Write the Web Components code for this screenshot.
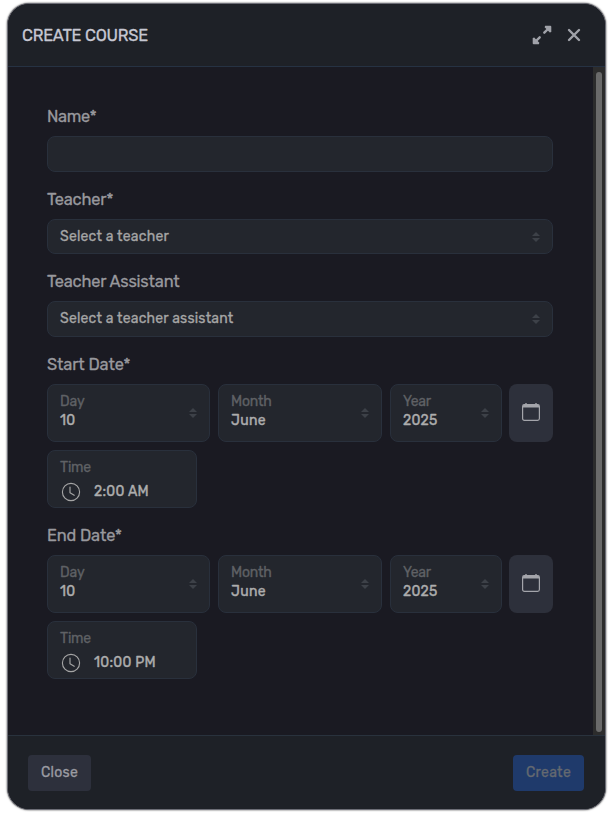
<!DOCTYPE html>
<html lang="en">
<head>
<meta charset="utf-8">
<title>Create course</title>
<style>
html,body{margin:0;background:#fff}
body{font-family:Rubik,Roboto,"Liberation Sans",sans-serif;font-weight:400;-webkit-text-stroke:.3px;width:612px;height:814px;overflow:hidden}
</style>
</head>
<body>
<course-dialog></course-dialog>
<script>
const define = (name, html, init) => customElements.define(name, class extends HTMLElement {
  connectedCallback() {
    if (this.shadowRoot) return;
    const t = document.createElement('template');
    t.innerHTML = html;
    this.attachShadow({mode: 'open'}).append(t.content.cloneNode(true));
    if (init) init(this, this.shadowRoot);
  }
});

/* Text run tracked to a given advance width */
define('fit-text', `<style>:host{display:block;white-space:nowrap}span{display:inline-block}</style><span><slot></slot></span>`,
  (el, root) => {
    const s = root.querySelector('span');
    const n = el.textContent.length;
    s.style.letterSpacing = (Number(el.getAttribute('w')) - s.getBoundingClientRect().width) / n + 'px';
  });

define('field-label', `<style>:host{display:block;height:20px;font-size:16.4px;line-height:20px;color:#98989d}</style><slot></slot>`);

define('sort-arrows', `<style>:host{display:block;width:8px;height:10px}svg{display:block}</style>
<svg width="8" height="10"><path d="M4 0L8 4H0zM0 6H8L4 10z" fill="#3d4148"/></svg>`);

define('text-box', `<style>:host{display:block;box-sizing:border-box;border:1px solid #29303c;border-radius:8px;background:#23262d}</style>`);

define('select-box', `<style>:host{display:flex;box-sizing:border-box;border:1px solid #29303c;border-radius:8px;background:#23262d;align-items:center;justify-content:space-between;padding:0 12px;font-size:14px;line-height:18px;color:#a5a5a5}</style>
<slot></slot><sort-arrows></sort-arrows>`);

define('date-part', `<style>:host{display:flex;box-sizing:border-box;height:58px;border:1px solid #29303c;border-radius:8px;background:#23262d;align-items:center;justify-content:space-between;padding:0 12px;font-size:14px;line-height:19px}
.c{height:42px}.n{color:#5f6165;height:19px}.v{color:#adadad;-webkit-text-stroke:.4px}</style>
<div class="c"><div class="n"><slot name="name"></slot></div><div class="v"><slot></slot></div></div><sort-arrows></sort-arrows>`);

define('time-box', `<style>:host{display:block;box-sizing:border-box;width:150px;height:58px;margin-top:8px;border:1px solid #29303c;border-radius:8px;background:#23262d;padding:7px 12px;font-size:14px;line-height:19px}
.n{color:#5f6165}.r{display:flex;align-items:center;padding:4px 0 0 1px;gap:13px}svg{display:block;margin-top:1px}.v{color:#adadad;-webkit-text-stroke:.4px}</style>
<div class="n"><fit-text w="31">Time</fit-text></div>
<div class="r"><svg width="20" height="20" viewBox="0 0 20 20" fill="none" stroke="#a5a5a5" stroke-width="1.15" stroke-linecap="round" stroke-linejoin="round"><circle cx="10" cy="10" r="8.6"/><path d="M9 5V10.8L13.2 13.3"/></svg><div class="v"><slot></slot></div></div>`);

define('calendar-button', `<style>:host{display:flex;height:58px;border-radius:8px;background:#2d303b;align-items:center;justify-content:center}svg{display:block;margin-top:-2px}</style>
<svg width="18" height="18" viewBox="0 0 18 18"><rect x=".6" y="1.6" width="16.8" height="15.8" rx="1.8" fill="none" stroke="#a4a5ab" stroke-width="1.2"/><path d="M1 2.7Q1 1.5 2.4 1.5H15.6Q17 1.5 17 2.7V4.4H1z" fill="#a4a5ab"/><path d="M4 0V2M14 0V2" stroke="#a4a5ab" stroke-width="1.4"/></svg>`);

define('date-group', `<style>:host{display:block}.g{display:grid;grid-template-columns:163px 164px 112px 44px;column-gap:8px}calendar-button{margin-left:-1px;width:44px}</style>
<div class="g">
<date-part><fit-text slot="name" w="24.5">Day</fit-text><fit-text w="15.5">10</fit-text></date-part>
<date-part><fit-text slot="name" w="40.5">Month</fit-text><fit-text w="35">June</fit-text></date-part>
<date-part><fit-text slot="name" w="28">Year</fit-text><fit-text w="34.5">2025</fit-text></date-part>
<calendar-button></calendar-button></div>
<time-box><slot></slot></time-box>`);

define('push-button', `<style>:host{display:flex;box-sizing:border-box;height:36px;border-radius:4px;align-items:center;justify-content:center;background:#2d303c;color:#9b9ba2;font-size:14px;line-height:18px}
:host([primary]){background:#1f3a6b;color:#646970}</style><slot></slot>`);

define('dialog-header', `<style>:host{display:flex;box-sizing:border-box;height:63px;align-items:center;padding:1px 24px 0 14px;background:#1e2127;border-bottom:1px solid #263243;color:#c6c7d2;font-size:16.4px;line-height:20px}
fit-text{flex:1}svg{display:block;margin-top:-1px}.x{margin-left:15px}</style>
<fit-text w="126">CREATE COURSE</fit-text>
<svg width="20" height="20" viewBox="0 0 20 20" fill="none" stroke="#a0a2a9" stroke-width="2.4" stroke-linecap="round"><path d="M12.3 7.7L16 4M7.7 12.3L4 16"/><path d="M13.2 .7H18.3Q19.3.7 19.3 1.7V7L17.8 7.4 12.6 2.2ZM6.8 19.3H1.7Q.7 19.3 .7 18.3V13L2.2 12.6 7.4 17.8Z" fill="#a0a2a9" stroke="none"/></svg>
<svg class="x" width="14" height="14" viewBox="0 0 14 14" stroke="#a0a2a9" stroke-width="2.4" stroke-linecap="round"><path d="M2 2L12 12M12 2L2 12"/></svg>`);

define('dialog-footer', `<style>:host{display:flex;box-sizing:border-box;height:74px;background:#1e2127;border-top:1px solid #29323d;justify-content:space-between;padding:19px 21px 0 20px}
.a{width:63px}.b{width:71px}</style>
<push-button class="a"><fit-text w="37">Close</fit-text></push-button><push-button primary class="b"><fit-text w="45">Create</fit-text></push-button>`);

define('scroll-rail', `<style>:host{display:block;box-sizing:border-box;width:12px;background:#2c2c2c;padding:5px 3px 3px}div{height:100%;width:6px;border-radius:3px;background:#6a6a6a}</style><div></div>`);

define('course-dialog', `<style>:host{display:flex;flex-direction:column;box-sizing:border-box;margin:3px 0 0 7px;width:599px;height:807px;border:1px solid #6c6d76;border-radius:22px;overflow:hidden;background:#1a1a22;box-shadow:0 0 2px #000c}
.m{flex:1;display:flex;justify-content:space-between}form{display:block;width:506px;padding:40px 0 0 39px}
field-label{margin-bottom:9px}.i{height:36px;margin-bottom:18px}.s{height:35px;margin-bottom:18px}</style>
<dialog-header></dialog-header>
<div class="m"><form>
<field-label><fit-text w="49.5">Name*</fit-text></field-label><text-box class="i"></text-box>
<field-label><fit-text w="66.5">Teacher*</fit-text></field-label><select-box class="s"><fit-text w="109">Select a teacher</fit-text></select-box>
<field-label><fit-text w="132.5">Teacher Assistant</fit-text></field-label><select-box class="i"><fit-text w="173.5">Select a teacher assistant</fit-text></select-box>
<field-label><fit-text w="83.5">Start Date*</fit-text></field-label><date-group style="margin-bottom:18px"><fit-text w="55">2:00 AM</fit-text></date-group>
<field-label><fit-text w="75">End Date*</fit-text></field-label><date-group><fit-text w="62">10:00 PM</fit-text></date-group>
</form><scroll-rail></scroll-rail></div>
<dialog-footer></dialog-footer>`);
</script>
</body>
</html>
